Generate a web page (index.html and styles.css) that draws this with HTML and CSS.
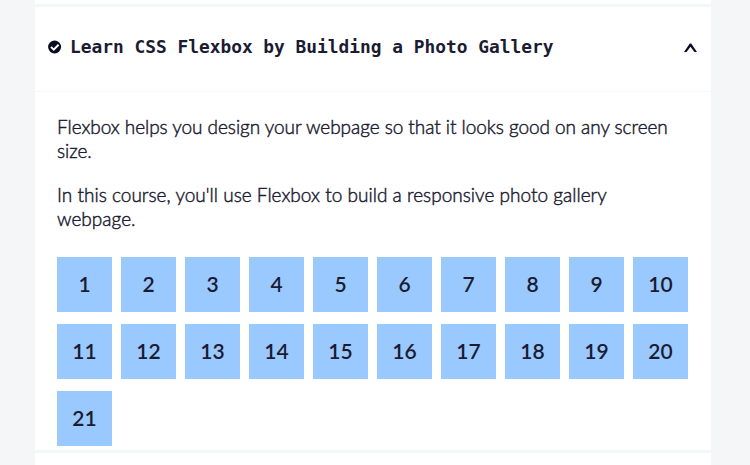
FILE: index.html
```html
<!DOCTYPE html>
<html lang="en">
<head>
<meta charset="utf-8">
<title>Learn CSS Flexbox</title>
<link rel="stylesheet" href="styles.css">
</head>
<body>
<main class="map">
  <div class="block prev"></div>
  <section class="block course">
    <header class="head">
      <svg class="check" viewBox="0 0 14 14"><circle cx="6.600" cy="7" r="6.5" fill="#0a0a23"/><path d="M3 6.900l2.700 2.700 4.900-4.900" fill="none" stroke="#fff" stroke-width="2"/></svg>
      <h3 class="title">Learn CSS Flexbox by Building a Photo Gallery</h3>
      <svg class="caret" viewBox="0 0 14 10"><path d="M0 9h2.500L6.500 3.700 10.500 9H13L7.200 .5H5.800z" fill="#0a0a23"/></svg>
    </header>
    <div class="body">
      <p>Flexbox helps you design your webpage so that it looks good on any screen size.</p>
      <p class="wide">In this course, you'll use Flexbox to build a responsive photo gallery webpage.</p>
      <div class="steps">
        <a>1</a><a>2</a><a>3</a><a>4</a><a>5</a><a>6</a><a>7</a><a>8</a><a>9</a><a>10</a><a>11</a><a>12</a><a>13</a><a>14</a><a>15</a><a>16</a><a>17</a><a>18</a><a>19</a><a>20</a><a>21</a>
      </div>
    </div>
  </section>
  <div class="block next"></div>
</main>
</body>
</html>
```
FILE: styles.css
```css
* { box-sizing: border-box; }
body { margin: 0; height: 465px; overflow: hidden; background: #f5f6f7; color: #1b1b32; font: 18px/24px Lato, sans-serif; }
.map { width: 676px; margin-left: 35px; }
.block { background: #fff; }
.prev { height: 4px; margin-bottom: 3px; }
.next { height: 20px; margin-top: 3px; }
.course { height: 443px; }
.head { display: flex; align-items: center; height: 85px; padding: 0 13px 4px 13px; border-bottom: 1px solid #f5f6f7; }
.check { width: 14px; height: 14px; }
.title { flex: 1; margin: 0 0 0 8px; font: bold 17.85px/24px "DejaVu Sans Mono", monospace; white-space: nowrap; }
.caret { width: 14px; height: 10px; margin-top: 2px; }
.body { padding: 23px 22px 0; }
p { margin: 0 0 20px; padding-right: 12px; font-size: 19px; font-weight: 300; letter-spacing: -0.05px; -webkit-text-stroke: 0.45px #1b1b32; }
.wide { letter-spacing: 0.02px; }
.steps { display: grid; grid-template-columns: repeat(10, 55px); gap: 12px 9px; margin-top: 26px; }
.steps a { height: 55px; background: #99c9ff; font-size: 21px; font-weight: 600; line-height: 54px; text-align: center; }
```
